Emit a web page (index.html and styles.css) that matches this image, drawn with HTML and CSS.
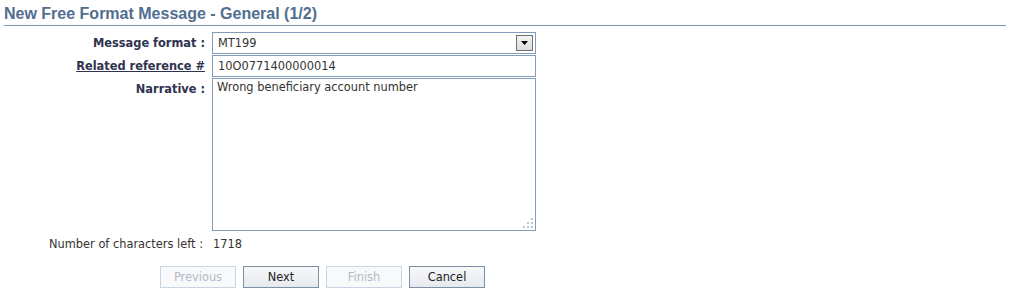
FILE: index.html
```html
<!DOCTYPE html>
<html>
<head>
<meta charset="utf-8">
<link rel="stylesheet" href="styles.css">
</head>
<body>
<h1 class="title">New Free Format Message - General (1/2)</h1>
<form class="form">
  <div class="grid">
    <label class="lbl">Message format :</label>
    <div class="field select-wrap">
      <select class="select"><option>MT199</option></select>
      <span class="arrow"><svg width="7" height="4" viewBox="0 0 7 4"><path d="M0 0H7L3.5 4Z" fill="#000"/></svg></span>
    </div>
    <label class="lbl"><span class="u">Related reference #</span></label>
    <div class="field"><input class="input" type="text" value="10O0771400000014"></div>
    <label class="lbl">Narrative :</label>
    <div class="field area-wrap">
      <textarea class="area">Wrong beneficiary account number</textarea>
      <span class="grip"><i class="d1"></i><i class="d2"></i><i class="d3"></i><i class="d4"></i><i class="d5"></i><i class="d6"></i></span>
    </div>
    <div class="plain">Number of characters left :</div>
    <div class="count">1718</div>
  </div>
  <div class="buttons">
    <button type="button" class="btn" disabled>Previous</button>
    <button type="button" class="btn">Next</button>
    <button type="button" class="btn" disabled>Finish</button>
    <button type="button" class="btn">Cancel</button>
  </div>
</form>
</body>
</html>
```
FILE: styles.css
```css
html, body { margin: 0; padding: 0; background: #fff; }
body {
  padding: 0 6px 0 4px;
  font-family: "DejaVu Sans", Verdana, sans-serif;
  font-size: 11.4px;
  color: #333;
}
.title {
  margin: 0;
  padding-top: 6px;
  padding-bottom: 3px;
  font-family: "Liberation Sans", Arial, sans-serif;
  font-size: 16px;
  line-height: 16px;
  font-weight: bold;
  color: #4f6e90;
  border-bottom: 1px solid #7f96ac;
}
.form { margin: 6px 0 0 0; }
.grid {
  display: grid;
  grid-template-columns: 201px 324px;
  grid-template-rows: 22px 22px 153px auto;
  column-gap: 7px;
  row-gap: 1px;
  align-items: start;
}
.lbl {
  text-align: right;
  font-weight: bold;
  color: #2f3350;
  line-height: 22px;
}
.u { text-decoration: underline; }
.field { position: relative; }
.select, .input, .area {
  display: block;
  box-sizing: border-box;
  width: 324px;
  margin: 0;
  border: 1px solid #7f9db9;
  background: #fff;
  font-family: "DejaVu Sans", Verdana, sans-serif;
  font-size: 11.4px;
  color: #333;
  outline: none;
}
.select {
  height: 22px;
  padding: 0 0 0 5px;
  appearance: none;
  -webkit-appearance: none;
  border-radius: 0;
}
.arrow {
  position: absolute;
  top: 3px;
  right: 3px;
  width: 15px;
  height: 14px;
  border: 1px solid #6f6f6f;
  background: linear-gradient(#f4f4f4, #dcdcdc);
  display: flex;
  align-items: center;
  justify-content: center;
}
.input {
  height: 22px;
  padding: 0 5px;
}
.area {
  height: 153px;
  padding: 1px 4px;
  resize: none;
  line-height: 14px;
}
.grip { position: absolute; right: 3px; bottom: 3px; width: 10px; height: 10px; }
.grip i { position: absolute; width: 2px; height: 2px; background: #c4c4c4; }
.grip .d1 { right: 0; top: 0; }
.grip .d2 { right: 0; top: 4px; }
.grip .d3 { right: 4px; top: 4px; }
.grip .d4 { right: 0; top: 8px; }
.grip .d5 { right: 4px; top: 8px; }
.grip .d6 { right: 8px; top: 8px; }
.plain {
  margin-top: 4px;
  padding-left: 45px;
  color: #333;
  line-height: 16px;
  white-space: nowrap;
}
.count {
  margin-top: 4px;
  padding-left: 1px;
  line-height: 16px;
}
.buttons {
  display: flex;
  gap: 7px;
  margin-top: 14px;
  padding-left: 156px;
}
.btn {
  box-sizing: border-box;
  width: 76px;
  height: 22px;
  margin: 0;
  padding: 0;
  border: 1px solid #7a90a8;
  background: linear-gradient(#f7f8fa, #e6e9ee);
  font-family: "DejaVu Sans", Verdana, sans-serif;
  font-size: 11.4px;
  color: #222;
}
.btn:disabled {
  border-color: #c9d5e3;
  background: #f8f9fb;
  color: #b3bac6;
}
```
